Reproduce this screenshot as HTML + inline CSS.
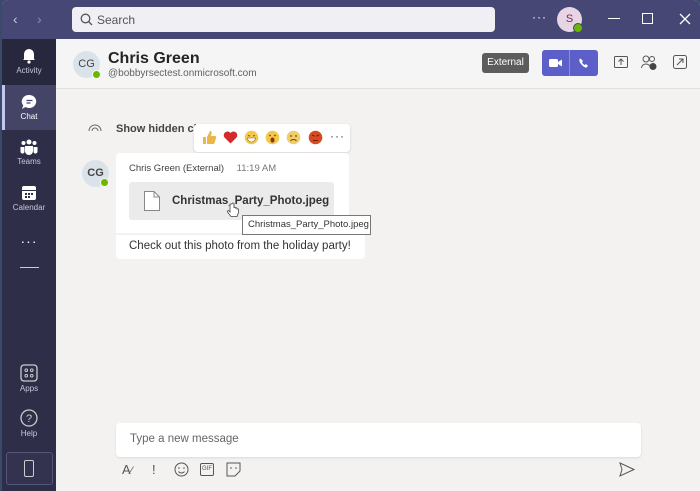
<!DOCTYPE html>
<html><head><style>
*{margin:0;padding:0;box-sizing:border-box}
body{width:700px;height:491px;overflow:hidden;background:#3a4a6a;font-family:"Liberation Sans",sans-serif;position:relative}
.win{position:absolute;left:2px;top:0;width:698px;height:491px;background:#f3f2f1;border-radius:6px 6px 0 0;overflow:hidden}
.title{position:absolute;left:0;top:0;width:698px;height:39px;background:#464775}
.side{position:absolute;left:0;top:39px;width:54px;height:452px;background:#2e2e48}
.ni{position:absolute;left:0;width:54px;text-align:center;color:#c8c8d8;font-size:8px}
.hdr{position:absolute;left:54px;top:39px;right:0;height:50px;border-bottom:1px solid #e1dfdd;background:#f5f5f5}
.av{position:absolute;border-radius:50%;background:#dbe3ea;color:#444;font-weight:bold;text-align:center}
.dot{position:absolute;width:9px;height:9px;border-radius:50%;background:#6bb700;border:1.5px solid #f5f5f5}
.em{position:absolute;top:0}
</style></head><body>
<div class="win">
<div class="title">
 <div style="position:absolute;left:11px;top:11px;color:#c8c9e0;font-size:14px">&#8249;</div>
 <div style="position:absolute;left:35px;top:11px;color:#8c8db5;font-size:14px">&#8250;</div>
 <div style="position:absolute;left:70px;top:7px;width:423px;height:25px;background:#f0f0f4;border-radius:4px">
  <svg style="position:absolute;left:8px;top:6px" width="13" height="13"><circle cx="5.5" cy="5.5" r="4.3" fill="none" stroke="#555" stroke-width="1.3"/><line x1="8.5" y1="8.5" x2="12" y2="12" stroke="#555" stroke-width="1.3"/></svg>
  <span style="position:absolute;left:25px;top:6px;font-size:12px;color:#555">Search</span></div>
 <div style="position:absolute;left:530px;top:10px;color:#fff;font-size:12px;letter-spacing:1px">···</div>
 <div style="position:absolute;left:555px;top:7px;width:25px;height:25px;border-radius:50%;background:#e8d5e4;color:#6b2d5c;font-size:11px;text-align:center;line-height:25px">S</div>
 <div class="dot" style="left:571px;top:23px;border-color:#464775;width:10px;height:10px"></div>
 <div style="position:absolute;left:606px;top:18px;width:12px;height:1px;background:#fff"></div>
 <div style="position:absolute;left:640px;top:13px;width:11px;height:11px;border:1.3px solid #fff"></div>
 <svg style="position:absolute;left:677px;top:13px" width="12" height="12"><path d="M1 1L11 11M11 1L1 11" stroke="#fff" stroke-width="1.3"/></svg>
</div>
<div class="side">
 <div style="position:absolute;left:0;top:0;width:54px;height:46px;background:#27273d"></div>
 <div class="ni" style="top:8px"><svg width="16" height="17"><path d="M3 12 V7 a5 5 0 0 1 10 0 V12 L14 13 H2 Z" fill="#fff"/><circle cx="8" cy="15" r="1.6" fill="#fff"/></svg><br>Activity</div>
 <div style="position:absolute;left:0;top:46px;width:54px;height:45px;background:#444466"></div>
 <div style="position:absolute;left:0;top:46px;width:3px;height:45px;background:#c5c6f0"></div>
 <div class="ni" style="top:55px;color:#fff"><svg width="17" height="16"><path d="M8.5 1 a7 6.5 0 1 1 -4 12 L1 15 L2.3 11.5 A7 6.5 0 0 1 8.5 1Z" fill="#fff"/><line x1="5.5" y1="6.5" x2="11.5" y2="6.5" stroke="#444466" stroke-width="1.2"/><line x1="5.5" y1="9" x2="9.5" y2="9" stroke="#444466" stroke-width="1.2"/></svg><br>Chat</div>
 <div class="ni" style="top:100px"><svg width="18" height="16"><circle cx="9" cy="3" r="2.5" fill="#fff"/><circle cx="3.5" cy="4" r="2" fill="#fff"/><circle cx="14.5" cy="4" r="2" fill="#fff"/><path d="M5 7h8v5a4 4 0 0 1-8 0z" fill="#fff"/><path d="M0.5 8h4v5a2 2 0 0 1-4-1z" fill="#fff"/><path d="M13.5 8h4v4a2 2 0 0 1-4 1z" fill="#fff"/></svg><br>Teams</div>
 <div class="ni" style="top:146px"><svg width="16" height="16"><rect x="1" y="1" width="14" height="14" rx="2" fill="#fff"/><rect x="1" y="5" width="14" height="1" fill="#2e2e48"/><g fill="#2e2e48"><rect x="4" y="8" width="2" height="2"/><rect x="7" y="8" width="2" height="2"/><rect x="10" y="8" width="2" height="2"/><rect x="4" y="11" width="2" height="2"/><rect x="7" y="11" width="2" height="2"/></g></svg><br>Calendar</div>
 <div class="ni" style="top:194px;color:#fff;font-size:14px;letter-spacing:1px">···</div>
 <div style="position:absolute;left:18px;top:228px;width:19px;height:1px;background:#ccc"></div>
 <div class="ni" style="top:325px"><svg width="18" height="18"><rect x="1" y="1" width="16" height="16" rx="3" fill="none" stroke="#ccc" stroke-width="1.3"/><g fill="none" stroke="#ccc"><rect x="5" y="5" width="2.5" height="2.5" rx="1"/><rect x="10.5" y="5" width="2.5" height="2.5" rx="1"/><rect x="5" y="10.5" width="2.5" height="2.5" rx="1"/><rect x="10.5" y="10.5" width="2.5" height="2.5" rx="1"/></g></svg><br>Apps</div>
 <div class="ni" style="top:370px"><svg width="18" height="18"><circle cx="9" cy="9" r="8" fill="none" stroke="#ccc" stroke-width="1.3"/><text x="9" y="13" font-size="11" fill="#ccc" text-anchor="middle" font-family="Liberation Sans">?</text></svg><br>Help</div>
 <div style="position:absolute;left:4px;top:413px;width:47px;height:33px;border:1px solid #55557a;border-radius:3px;background:#333350"></div>
 <div style="position:absolute;left:22px;top:421px;width:10px;height:17px;border:1.3px solid #ccc;border-radius:2px"></div>
</div>
<div class="hdr">
 <div class="av" style="left:17px;top:12px;width:27px;height:27px;line-height:27px;font-size:11px;font-weight:normal">CG</div>
 <div class="dot" style="left:36px;top:31px"></div>
 <div style="position:absolute;left:52px;top:11px;font-size:16px;font-weight:bold;color:#242424">Chris Green</div>
 <div style="position:absolute;left:52px;top:29px;font-size:10px;color:#616161">@bobbyrsectest.onmicrosoft.com</div>
 <div style="position:absolute;left:426px;top:14px;width:47px;height:20px;background:#5c5c5c;border-radius:3px;color:#fff;font-size:10px;text-align:center;padding-top:5px;line-height:10px">External</div>
 <div style="position:absolute;left:486px;top:11px;width:56px;height:26px;background:#5b5fc7;border-radius:3px"></div>
 <div style="position:absolute;left:513px;top:11px;width:1px;height:26px;background:#8a8ddc"></div>
 <svg style="position:absolute;left:493px;top:19px" width="14" height="10"><rect x="0" y="1" width="9" height="8" rx="1.5" fill="#fff"/><path d="M9 4 L13 1.5 V8.5 L9 6Z" fill="#fff"/></svg>
 <svg style="position:absolute;left:522px;top:18px" width="12" height="12"><path d="M2 1.5C1 2.5 1 4.5 3 7s4.5 4 5.5 3.5l1.5-1.5-2-2-1.3 1C5.5 7.5 4.5 6.5 4 5.3l1-1.3-2-2Z" fill="#fff"/></svg>
 <svg style="position:absolute;left:558px;top:17px" width="14" height="13"><rect x="0.5" y="0.5" width="13" height="11" rx="1" fill="none" stroke="#555"/><path d="M7 9V3M4.5 5.5 7 3l2.5 2.5" fill="none" stroke="#555"/></svg>
 <svg style="position:absolute;left:585px;top:16px" width="16" height="16"><circle cx="5" cy="4" r="3" fill="none" stroke="#555"/><circle cx="11" cy="4" r="2.5" fill="none" stroke="#555"/><path d="M0.5 13a4.5 4 0 0 1 9 0" fill="none" stroke="#555"/><circle cx="12" cy="11.5" r="3.5" fill="#444"/></svg>
 <svg style="position:absolute;left:617px;top:16px" width="14" height="14"><rect x="0.5" y="0.5" width="13" height="13" rx="2" fill="none" stroke="#555"/><path d="M4 10 10 4M6 4h4v4" fill="none" stroke="#555"/></svg>
</div>
<svg style="position:absolute;left:86px;top:123px" width="14" height="10"><path d="M1 8a6 6 0 0 1 12 0" fill="none" stroke="#666"/><path d="M4 8a3 3 0 0 1 6 0" fill="none" stroke="#666"/></svg>
<div style="position:absolute;left:114px;top:123px;font-size:11px;color:#444;font-weight:bold">Show hidden cl</div>
<div style="position:absolute;left:192px;top:124px;width:156px;height:28px;background:#fff;border-radius:4px;box-shadow:0 1px 3px rgba(0,0,0,.12);font-size:12px">
 <svg style="position:absolute;left:8px;top:6px" width="15" height="15"><path d="M1 7h3v7H1zM5 7l3-6c1.5 0 2 1 1.5 2.5L9 6h4c1 0 1.5 1 1 2l-1.5 5c-.3 1-1 1-2 1H5z" fill="#e8b84a"/></svg>
 <svg style="position:absolute;left:29px;top:7px" width="15" height="13"><path d="M7.5 12.5L1.5 6.5A3.3 3.3 0 0 1 7.5 2a3.3 3.3 0 0 1 6 4.5z" fill="#d42a2a"/></svg>
 <svg style="position:absolute;left:50px;top:6px" width="15" height="15"><circle cx="7.5" cy="7.5" r="6.8" fill="#f5c84c"/><path d="M3.5 8h8a4 4 0 0 1-8 0z" fill="#fff" stroke="#8a5a10" stroke-width=".6"/><path d="M4 5.5l2 .5M11 5.5l-2 .5" stroke="#8a5a10"/></svg>
 <svg style="position:absolute;left:71px;top:6px" width="15" height="15"><circle cx="7.5" cy="7.5" r="6.8" fill="#f5c84c"/><circle cx="5" cy="5.5" r=".9" fill="#6a4a10"/><circle cx="10" cy="5.5" r=".9" fill="#6a4a10"/><ellipse cx="7.5" cy="10" rx="2" ry="2.6" fill="#8a3a10"/></svg>
 <svg style="position:absolute;left:92px;top:6px" width="15" height="15"><circle cx="7.5" cy="7.5" r="6.8" fill="#f0cc6a"/><circle cx="5" cy="6" r=".9" fill="#6a4a10"/><circle cx="10" cy="6" r=".9" fill="#6a4a10"/><path d="M4.5 11a3.5 3 0 0 1 6 0" fill="none" stroke="#6a4a10"/></svg>
 <svg style="position:absolute;left:114px;top:6px" width="15" height="15"><circle cx="7.5" cy="7.5" r="6.8" fill="#d84a20"/><path d="M4 5l2.5 1.2M11 5l-2.5 1.2M5 10.5h5" stroke="#7a1a08"/></svg>
 <span style="position:absolute;left:136px;top:5px;color:#444;letter-spacing:1px">···</span>
</div>
<div class="av" style="left:80px;top:160px;width:27px;height:27px;line-height:27px;font-size:11px">CG</div>
<div class="dot" style="left:98px;top:178px;border-color:#f3f2f1"></div>
<div style="position:absolute;left:114px;top:153px;width:233px;height:80px;background:#fff;border-radius:4px 4px 0 0"></div>
<div style="position:absolute;left:114px;top:233px;width:249px;height:26px;background:#fff;border-radius:0 0 4px 4px;border-top:2px solid #f3f2f1"></div>
<div style="position:absolute;left:127px;top:163px;font-size:9.5px;color:#424242">Chris Green (External) <span style="color:#777;margin-left:10px">11:19 AM</span></div>
<div style="position:absolute;left:127px;top:182px;width:205px;height:38px;background:#ebebeb;border-radius:3px"></div>
<svg style="position:absolute;left:142px;top:191px" width="16" height="20"><path d="M0.5 0.5H10l5.5 5.5V19.5H0.5Z" fill="#fff" stroke="#888"/><path d="M10 0.5V6h5.5" fill="none" stroke="#888"/></svg>
<div style="position:absolute;left:170px;top:195px;font-size:11.5px;font-weight:bold;color:#333">Christmas_Party_Photo.jpeg</div>
<svg style="position:absolute;left:224px;top:202px" width="14" height="16"><path d="M4 2v8L2.5 8.5c-1 0-1.5 1-1 1.5L5 14.5h6l1.5-4V7.5c0-1-1.5-1-1.5 0V6.5c0-1-1.5-1-1.5 0V6c0-1-1.5-1-1.5 0V2c0-1.3-2-1.3-2 0z" fill="#fff" stroke="#444" stroke-width=".8"/></svg>
<div style="position:absolute;left:240px;top:215px;width:129px;height:20px;background:#fff;border:1px solid #777;font-size:9.5px;color:#333;line-height:18px;padding-left:5px">Christmas_Party_Photo.jpeg</div>
<div style="position:absolute;left:127px;top:240px;font-size:11.5px;color:#333">Check out this photo from the holiday party!</div>
<div style="position:absolute;left:114px;top:423px;width:525px;height:34px;background:#fff;border-radius:4px;box-shadow:0 1px 2px rgba(0,0,0,.1)"></div>
<div style="position:absolute;left:128px;top:433px;font-size:11.5px;color:#666">Type a new message</div>
<div style="position:absolute;left:120px;top:462px;font-size:13px;color:#555">A<span style="font-size:11px">⁄</span></div>
<div style="position:absolute;left:150px;top:462px;font-size:13px;color:#555">!</div>
<svg style="position:absolute;left:172px;top:462px" width="15" height="15"><circle cx="7.5" cy="7.5" r="6.5" fill="none" stroke="#555"/><circle cx="5" cy="6" r=".8" fill="#555"/><circle cx="10" cy="6" r=".8" fill="#555"/><path d="M4.5 9.5a3.5 3 0 0 0 6 0" fill="none" stroke="#555"/></svg>
<div style="position:absolute;left:198px;top:463px;width:14px;height:13px;border:1px solid #555;border-radius:2px;font-size:6px;color:#555;text-align:center;line-height:11px">GIF</div>
<svg style="position:absolute;left:224px;top:462px" width="15" height="15"><path d="M1 1H14V9L9 14H1Z" fill="none" stroke="#555"/><circle cx="5" cy="6" r=".8" fill="#555"/><circle cx="10" cy="6" r=".8" fill="#555"/></svg>
<svg style="position:absolute;left:617px;top:462px" width="16" height="15"><path d="M1 1L15 7.5 1 14 3 7.5Z" fill="none" stroke="#555"/></svg>
</div>
</body></html>
